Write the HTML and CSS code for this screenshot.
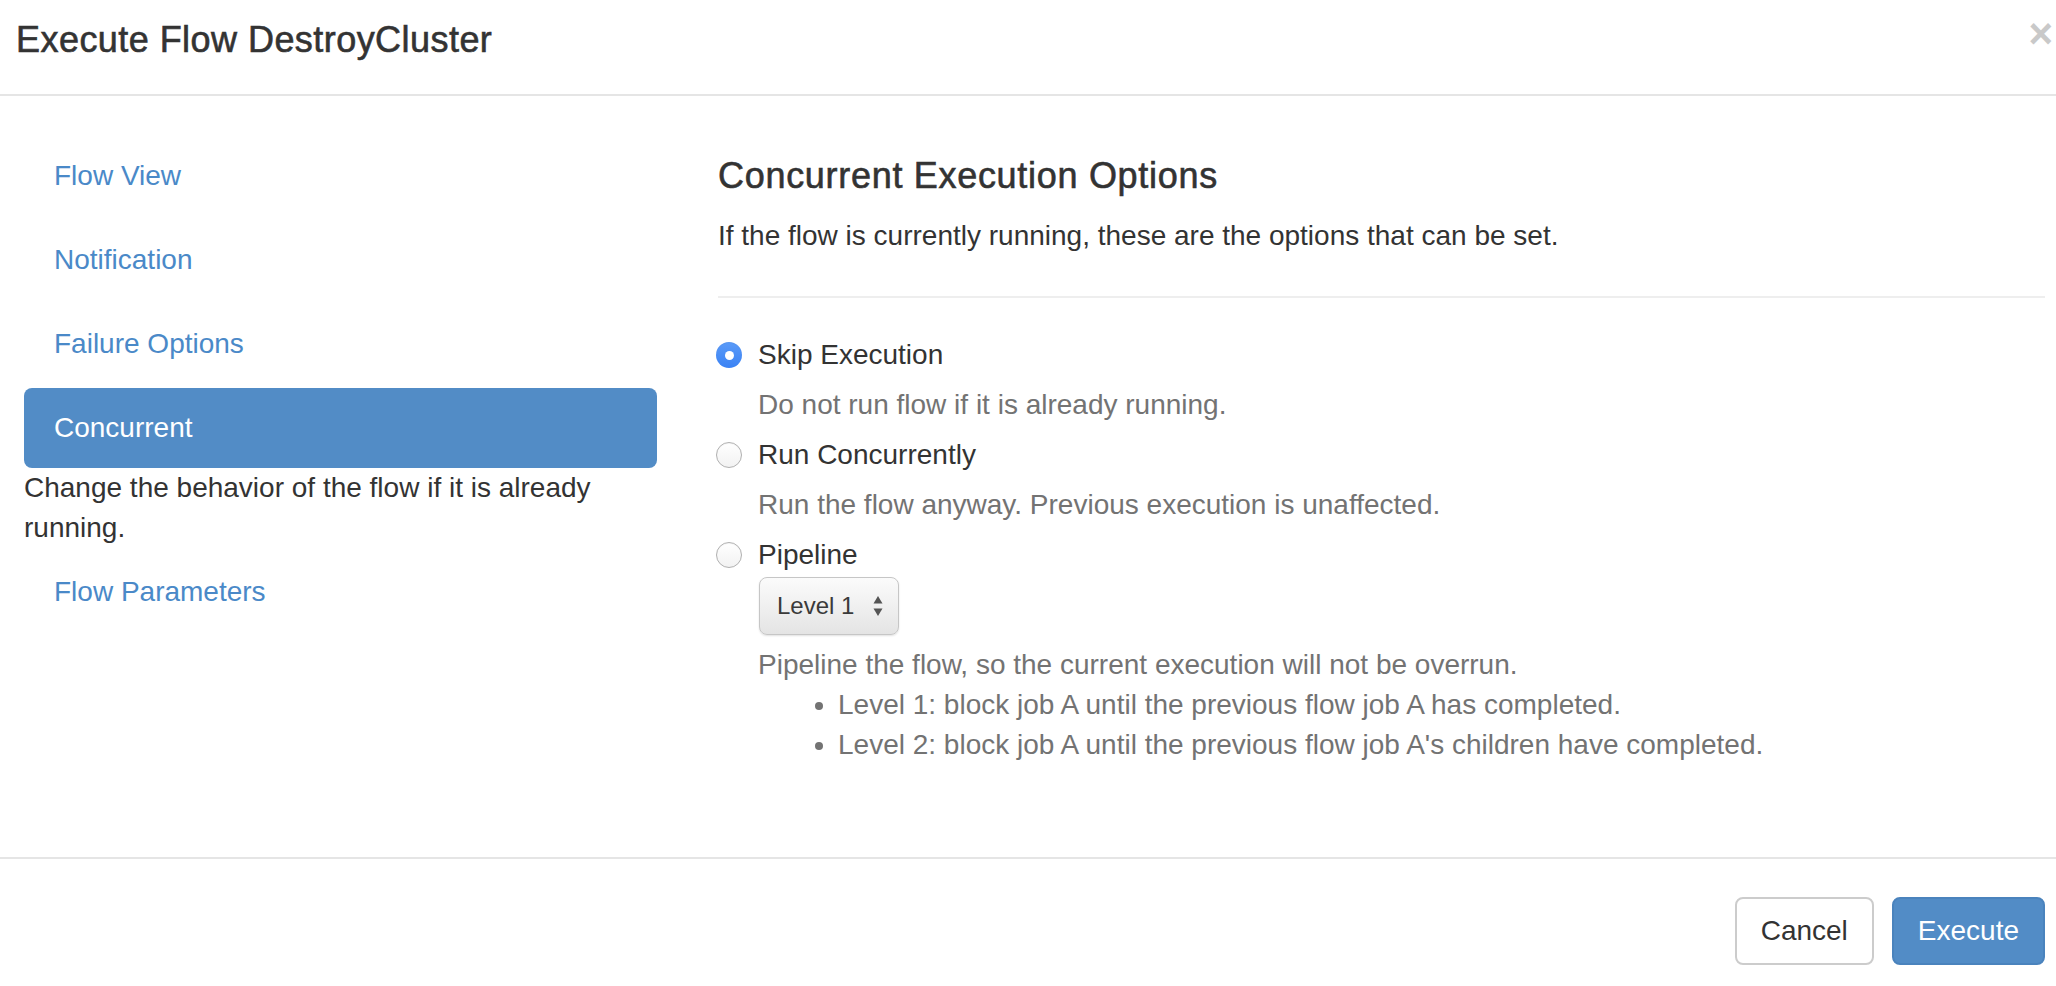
FILE: index.html
```html
<!DOCTYPE html>
<html lang="en">
<head>
<meta charset="utf-8">
<title>Execute Flow DestroyCluster</title>
<link rel="stylesheet" href="styles.css">
</head>
<body>
<div class="modal">
  <header class="modal-header">
    <h1 class="modal-title">Execute Flow DestroyCluster</h1>
    <span class="close">×</span>
  </header>
  <div class="modal-body">
    <nav class="side">
      <ul class="pills">
        <li><a class="pill">Flow View</a></li>
        <li><a class="pill">Notification</a></li>
        <li><a class="pill">Failure Options</a></li>
        <li><a class="pill active">Concurrent</a>
          <p class="side-desc">Change the behavior of the flow if it is already running.</p>
        </li>
        <li><a class="pill">Flow Parameters</a></li>
      </ul>
    </nav>
    <section class="panel">
      <h2 class="panel-title">Concurrent Execution Options</h2>
      <p class="panel-desc">If the flow is currently running, these are the options that can be set.</p>
      <hr class="divider">
      <div class="options">
        <div class="option">
          <label class="radio-row"><span class="radio checked"></span>Skip Execution</label>
          <p class="help">Do not run flow if it is already running.</p>
        </div>
        <div class="option">
          <label class="radio-row"><span class="radio"></span>Run Concurrently</label>
          <p class="help">Run the flow anyway. Previous execution is unaffected.</p>
        </div>
        <div class="option">
          <label class="radio-row"><span class="radio"></span>Pipeline</label>
          <div class="select-wrap">
            <div class="select">
              <span class="select-text">Level 1</span>
              <svg class="select-arrows" width="10" height="22" viewBox="0 0 10 22">
                <path d="M5 1 L9.5 8.5 L0.5 8.5 Z" fill="#555"/>
                <path d="M5 21 L9.5 13.5 L0.5 13.5 Z" fill="#555"/>
              </svg>
            </div>
          </div>
          <p class="help">Pipeline the flow, so the current execution will not be overrun.</p>
          <ul class="help-list">
            <li>Level 1: block job A until the previous flow job A has completed.</li>
            <li>Level 2: block job A until the previous flow job A's children have completed.</li>
          </ul>
        </div>
      </div>
    </section>
  </div>
  <footer class="modal-footer">
    <button class="btn btn-default">Cancel</button>
    <button class="btn btn-primary">Execute</button>
  </footer>
</div>
</body>
</html>
```

FILE: styles.css
```css
* { box-sizing: border-box; }

html, body {
  margin: 0;
  padding: 0;
  background: #ffffff;
}

body {
  font-family: "Liberation Sans", Arial, Helvetica, sans-serif;
  font-size: 28px;
  line-height: 40px;
  color: #333333;
  overflow: hidden;
}

.modal {
  width: 2056px;
}

/* Header */
.modal-header {
  display: flex;
  justify-content: space-between;
  align-items: flex-start;
  padding: 14px 3px 28px 16px;
  border-bottom: 2px solid #e5e5e5;
}

.modal-title {
  margin: 0;
  font-size: 36px;
  line-height: 52px;
  font-weight: 400;
  letter-spacing: 0.45px;
  -webkit-text-stroke: 0.6px #333333;
  color: #333333;
}

.close {
  margin-top: -1px;
  font-size: 42px;
  line-height: 1;
  font-weight: 700;
  color: #c9c9c9;
}

/* Body */
.modal-body {
  display: grid;
  grid-template-columns: 633px 1fr;
  column-gap: 61px;
  padding: 40px 11px 82px 24px;
}

.pills {
  list-style: none;
  margin: 0;
  padding: 0;
}

.pills li + li {
  margin-top: 4px;
}

.pill {
  display: block;
  padding: 20px 30px;
  line-height: 40px;
  color: #4a89c8;
  border-radius: 8px;
}

.pill.active {
  background: #528cc6;
  color: #ffffff;
}

.side-desc {
  margin: 0;
  color: #333333;
}

.panel-title {
  margin: 20px 0 0;
  font-size: 36px;
  line-height: 40px;
  font-weight: 400;
  letter-spacing: 0.7px;
  -webkit-text-stroke: 0.6px #333333;
  color: #333333;
}

.panel-desc {
  margin: 20px 0 0;
}

.divider {
  margin: 40px 0 0;
  border: 0;
  border-top: 2px solid #eeeeee;
  height: 0;
}

.options {
  margin-top: 37px;
}

.option {
  margin-bottom: 10px;
}

.radio-row {
  display: flex;
  align-items: center;
  height: 40px;
  color: #333333;
}

.radio {
  flex: none;
  width: 26px;
  height: 26px;
  margin: 0 16px 0 -2px;
  border-radius: 50%;
  border: 1.5px solid #b0b0b0;
  background: linear-gradient(#ffffff, #f2f2f2);
  box-shadow: inset 0 1px 1px rgba(0,0,0,0.04);
  display: flex;
  align-items: center;
  justify-content: center;
}

.radio.checked {
  border: none;
  background: linear-gradient(#5b9bf8, #3a82f4);
}

.radio.checked::after {
  content: "";
  width: 9px;
  height: 9px;
  border-radius: 50%;
  background: #ffffff;
}

.help {
  margin: 10px 0 0;
  padding-left: 40px;
  color: #737373;
}

.select-wrap {
  padding: 2px 0 0 41px;
}

.select {
  display: flex;
  align-items: center;
  justify-content: space-between;
  width: 140px;
  height: 58px;
  padding: 0 15px 0 17px;
  border: 1px solid #c6c6c6;
  border-radius: 8px;
  background: linear-gradient(#fbfbfb 0%, #f0f0f0 50%, #e4e4e4 100%);
  box-shadow: 0 1px 2px rgba(0,0,0,0.12);
}

.select-text {
  font-size: 24px;
  line-height: 30px;
  color: #3a3a3a;
}

.select-arrows {
  display: block;
}

.help-list {
  margin: 0;
  padding-left: 120px;
  color: #737373;
}

.help-list li {
  line-height: 40px;
}

/* Footer */
.modal-footer {
  display: flex;
  justify-content: flex-end;
  gap: 18px;
  padding: 38px 11px 0 0;
  border-top: 2px solid #e5e5e5;
}

.btn {
  font-family: "Liberation Sans", Arial, Helvetica, sans-serif;
  font-size: 28px;
  line-height: 40px;
  padding: 12px 24px;
  border-radius: 8px;
  border: 2px solid #cccccc;
  background: #ffffff;
  color: #333333;
  cursor: pointer;
}

.btn-primary {
  background: #528cc6;
  border-color: #4a83bd;
  color: #ffffff;
}
```
